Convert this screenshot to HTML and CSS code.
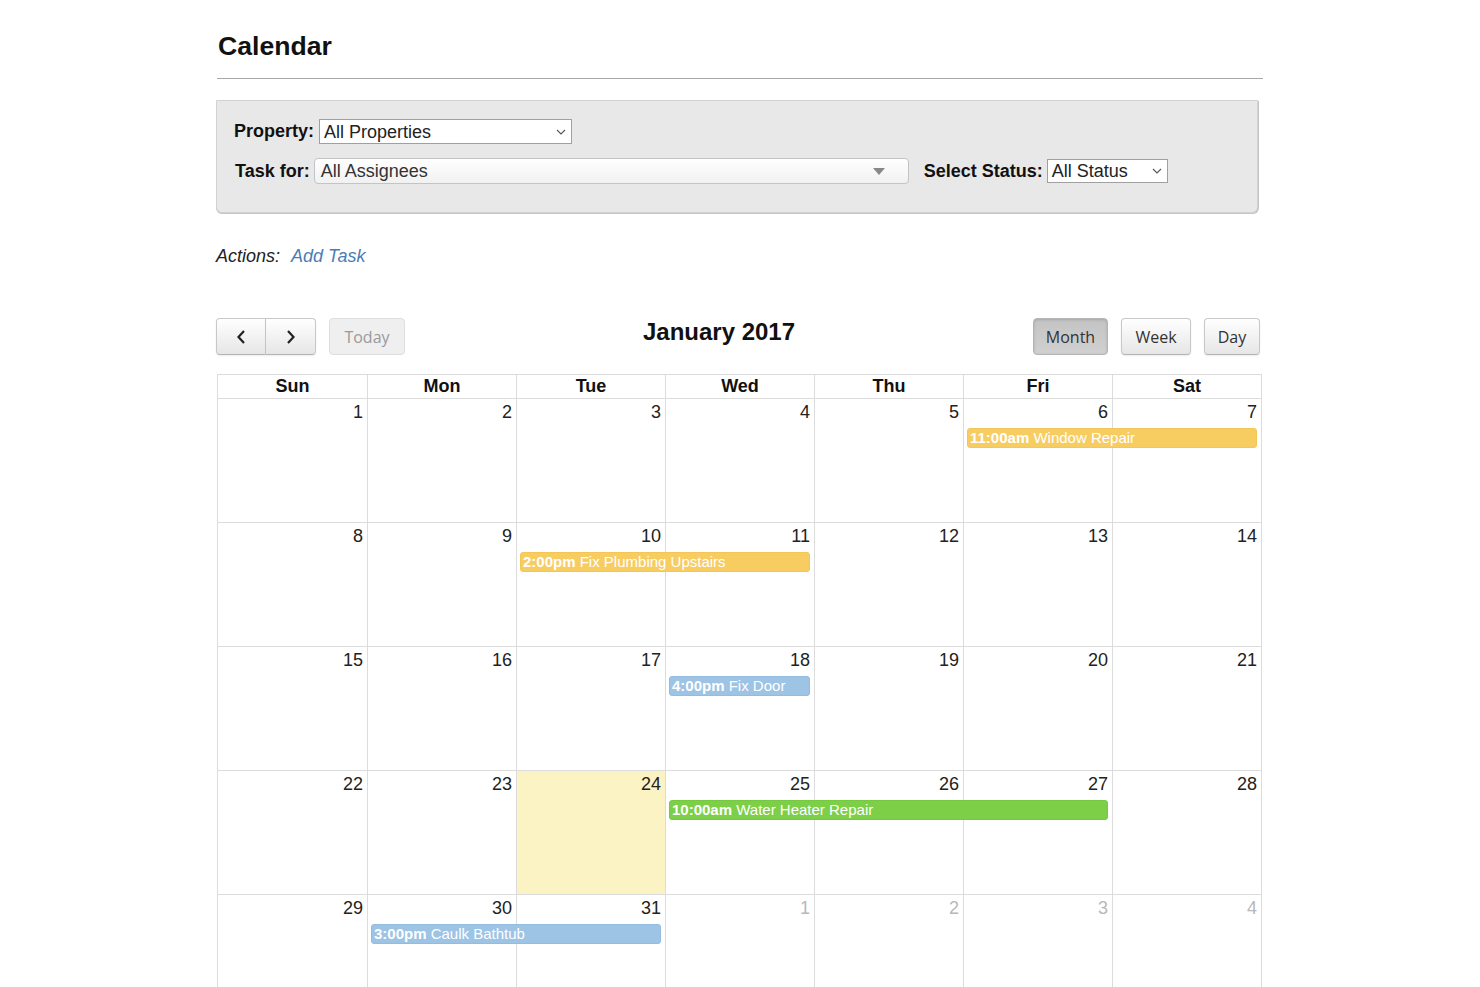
FILE: index.html
```html
<!DOCTYPE html>
<html lang="en">
<head>
<meta charset="utf-8">
<title>Calendar</title>
<link rel="stylesheet" href="styles.css">
</head>
<body>
<div class="page">
  <div class="page-header">
    <h1 class="page-title">Calendar</h1>
  </div>

  <div class="filters">
    <div class="filter-row">
      <span class="filter-label">Property:</span>
      <div class="select select-plain select-property">
        <span class="select-text">All Properties</span>
        <svg class="chev" width="10" height="6" viewBox="0 0 10 6"><path d="M1 1 L5 5 L9 1" fill="none" stroke="#555" stroke-width="1.1"/></svg>
      </div>
    </div>
    <div class="filter-row">
      <span class="filter-label label-task">Task for:</span>
      <div class="select select-rounded select-assignee">
        <span class="select-text">All Assignees</span>
        <svg class="tri" width="12" height="7" viewBox="0 0 12 7"><path d="M0 0 L12 0 L6 7 Z" fill="#888"/></svg>
      </div>
      <span class="filter-label label-status">Select Status:</span>
      <div class="select select-plain select-status">
        <span class="select-text">All Status</span>
        <svg class="chev" width="10" height="6" viewBox="0 0 10 6"><path d="M1 1 L5 5 L9 1" fill="none" stroke="#555" stroke-width="1.1"/></svg>
      </div>
    </div>
  </div>

  <div class="actions">
    <span class="actions-label">Actions:</span>
    <a class="actions-link" href="#">Add Task</a>
  </div>

  <div class="toolbar">
    <div class="toolbar-left">
      <div class="btn-group">
        <button class="btn btn-icon btn-first" type="button" aria-label="prev">
          <svg width="10" height="16" viewBox="0 0 10 16"><path d="M8 2 L2.5 8 L8 14" fill="none" stroke="#222" stroke-width="2.2"/></svg>
        </button>
        <button class="btn btn-icon btn-last" type="button" aria-label="next">
          <svg width="10" height="16" viewBox="0 0 10 16"><path d="M2 2 L7.5 8 L2 14" fill="none" stroke="#222" stroke-width="2.2"/></svg>
        </button>
      </div>
      <button class="btn btn-today" type="button">Today</button>
    </div>
    <h2 class="cal-title">January 2017</h2>
    <div class="toolbar-right">
      <button class="btn btn-view btn-active btn-month" type="button">Month</button>
      <button class="btn btn-view btn-week" type="button">Week</button>
      <button class="btn btn-view btn-day" type="button">Day</button>
    </div>
  </div>

  <div class="calendar">
    <div class="dow-row">
      <div class="dow">Sun</div><div class="dow">Mon</div><div class="dow">Tue</div><div class="dow">Wed</div><div class="dow">Thu</div><div class="dow">Fri</div><div class="dow">Sat</div>
    </div>

    <div class="week">
      <div class="bg c1"></div><div class="bg c2"></div><div class="bg c3"></div><div class="bg c4"></div><div class="bg c5"></div><div class="bg c6"></div><div class="bg c7"></div>
      <div class="num c1">1</div><div class="num c2">2</div><div class="num c3">3</div><div class="num c4">4</div><div class="num c5">5</div><div class="num c6">6</div><div class="num c7">7</div>
      <div class="event ev-yellow s6 e8"><b>11:00am</b> Window Repair</div>
    </div>

    <div class="week">
      <div class="bg c1"></div><div class="bg c2"></div><div class="bg c3"></div><div class="bg c4"></div><div class="bg c5"></div><div class="bg c6"></div><div class="bg c7"></div>
      <div class="num c1">8</div><div class="num c2">9</div><div class="num c3">10</div><div class="num c4">11</div><div class="num c5">12</div><div class="num c6">13</div><div class="num c7">14</div>
      <div class="event ev-yellow s3 e5"><b>2:00pm</b> Fix Plumbing Upstairs</div>
    </div>

    <div class="week">
      <div class="bg c1"></div><div class="bg c2"></div><div class="bg c3"></div><div class="bg c4"></div><div class="bg c5"></div><div class="bg c6"></div><div class="bg c7"></div>
      <div class="num c1">15</div><div class="num c2">16</div><div class="num c3">17</div><div class="num c4">18</div><div class="num c5">19</div><div class="num c6">20</div><div class="num c7">21</div>
      <div class="event ev-blue s4 e5"><b>4:00pm</b> Fix Door</div>
    </div>

    <div class="week">
      <div class="bg c1"></div><div class="bg c2"></div><div class="bg c3 today"></div><div class="bg c4"></div><div class="bg c5"></div><div class="bg c6"></div><div class="bg c7"></div>
      <div class="num c1">22</div><div class="num c2">23</div><div class="num c3">24</div><div class="num c4">25</div><div class="num c5">26</div><div class="num c6">27</div><div class="num c7">28</div>
      <div class="event ev-green s4 e7"><b>10:00am</b> Water Heater Repair</div>
    </div>

    <div class="week">
      <div class="bg c1"></div><div class="bg c2"></div><div class="bg c3"></div><div class="bg c4"></div><div class="bg c5"></div><div class="bg c6"></div><div class="bg c7"></div>
      <div class="num c1">29</div><div class="num c2">30</div><div class="num c3">31</div><div class="num c4 other">1</div><div class="num c5 other">2</div><div class="num c6 other">3</div><div class="num c7 other">4</div>
      <div class="event ev-blue s2 e4"><b>3:00pm</b> Caulk Bathtub</div>
    </div>
  </div>
</div>
</body>
</html>
```

FILE: styles.css
```css
html, body {
  margin: 0;
  padding: 0;
  background: #fff;
}

body {
  font-family: "Liberation Sans", Arial, sans-serif;
  color: #111;
}

.page {
  width: 1046px;
  margin: 0 auto;
  padding-top: 29px;
}

.page-header {
  border-bottom: 1px solid #a8a8a8;
  padding-bottom: 15px;
}

.page-title {
  margin: 0 0 0 1px;
  font-size: 26.6px;
  line-height: 34px;
  font-weight: bold;
  color: #111;
}

/* Filters */
.filters {
  margin-top: 21px;
  width: 1042px;
  margin-left: -1px;
  background: #e8e8e8;
  border: 1px solid #d2d2d2;
  border-radius: 0 0 6px 6px;
  box-shadow: 1px 1px 0 #c6c6c6, 0 1px 0 #c6c6c6;
  padding: 18px 0 27px 17px;
  box-sizing: border-box;
  height: 113px;
}

.filter-row {
  display: flex;
  align-items: center;
}

.filter-row + .filter-row {
  margin-top: 14px;
}

.filter-label {
  font-size: 18px;
  font-weight: bold;
  color: #111;
  white-space: nowrap;
}

.label-task {
  margin-left: 1px;
}

.label-status {
  margin-left: 15px;
}

.select {
  display: flex;
  align-items: center;
  justify-content: space-between;
  box-sizing: border-box;
  background: #fff;
  font-size: 18px;
  color: #222;
  margin-left: 5px;
}

.select-plain {
  border: 1px solid #a0a0a0;
  height: 25px;
  padding: 0 4px 0 4px;
}

.select-property {
  width: 253px;
}

.select-status {
  width: 121px;
  height: 24px;
  margin-left: 4px;
}

.select-rounded {
  width: 595px;
  height: 26px;
  border: 1px solid #c4c4c4;
  border-radius: 4px;
  background: linear-gradient(#ffffff, #f1f1f1);
  padding: 0 23px 0 6px;
  color: #333;
  margin-left: 4px;
}

.select-text {
  white-space: nowrap;
  line-height: 22px;
}

.chev {
  margin-right: 1px;
}

/* Actions */
.actions {
  margin-top: 32px;
  font-size: 18px;
  font-style: italic;
  line-height: 22px;
  margin-left: -1px;
}

.actions-label {
  color: #222;
}

.actions-link {
  color: #4a7db5;
  text-decoration: none;
  margin-left: 6px;
}

/* Toolbar */
.toolbar {
  margin-top: 51px;
  display: flex;
  justify-content: space-between;
  align-items: flex-start;
  margin-left: -1px;
  width: 1044px;
}

.toolbar-left, .toolbar-right {
  display: flex;
  gap: 13px;
}

.btn-group {
  display: flex;
}

.btn {
  font-family: "Open Sans", "DejaVu Sans", sans-serif;
  font-size: 16px;
  color: #333;
  height: 37px;
  border: 1px solid #c8c8c8;
  border-bottom-color: #b4b4b4;
  border-radius: 4px;
  background: linear-gradient(#ffffff, #e6e6e6);
  box-shadow: 0 1px 2px rgba(0,0,0,0.08);
  padding: 0;
  display: flex;
  align-items: center;
  justify-content: center;
  cursor: pointer;
}

.btn-icon {
  width: 50px;
}

.btn-first {
  border-radius: 4px 0 0 4px;
}

.btn-last {
  border-radius: 0 4px 4px 0;
  border-left: none;
  width: 50px;
}

.btn-today {
  width: 76px;
  color: #9a9a9a;
  background: #efefef;
  border-color: #dedede;
  box-shadow: none;
}

.btn-month { width: 75px; }
.btn-week { width: 70px; }
.btn-day { width: 56px; }

.btn-active {
  background: linear-gradient(#c4c4c4, #d0d0d0);
  border-color: #b4b4b4;
  box-shadow: inset 0 1px 3px rgba(0,0,0,0.15);
}

.cal-title {
  margin: 0;
  font-size: 24px;
  line-height: 28px;
  font-weight: bold;
  color: #111;
}

/* Calendar grid */
.calendar {
  margin-top: 19px;
  border: 1px solid #dcdcdc;
  width: 1045px;
  box-sizing: border-box;
  margin-left: 0;
}

.dow-row {
  display: grid;
  grid-template-columns: repeat(7, 1fr);
  border-bottom: 1px solid #dcdcdc;
}

.dow {
  text-align: center;
  font-size: 18px;
  font-weight: bold;
  line-height: 23px;
  border-left: 1px solid #dcdcdc;
  color: #111;
}

.dow:first-child {
  border-left: none;
}

.week {
  display: grid;
  grid-template-columns: repeat(7, 1fr);
  grid-template-rows: 29px 20px 1fr;
  height: 124px;
  border-bottom: 1px solid #dcdcdc;
  box-sizing: border-box;
}

.bg {
  grid-row: 1 / -1;
  border-left: 1px solid #dcdcdc;
}

.bg.c1 {
  border-left: none;
}

.today {
  background: #fcf3c5;
}

.c1 { grid-column: 1; }
.c2 { grid-column: 2; }
.c3 { grid-column: 3; }
.c4 { grid-column: 4; }
.c5 { grid-column: 5; }
.c6 { grid-column: 6; }
.c7 { grid-column: 7; }

.num {
  grid-row: 1;
  text-align: right;
  font-size: 18px;
  line-height: 22px;
  padding: 2px 4px 0 0;
  color: #222;
}

.num.other {
  color: #b8b8b8;
}

.event {
  grid-row: 2;
  margin: 0 4px 0 4px;
  height: 20px;
  line-height: 18px;
  border-radius: 3px;
  color: #fff;
  font-size: 15px;
  padding-left: 2px;
  white-space: nowrap;
  overflow: hidden;
  box-sizing: border-box;
}

.event b {
  font-weight: bold;
}

.s2 { grid-column-start: 2; }
.s3 { grid-column-start: 3; }
.s4 { grid-column-start: 4; }
.s6 { grid-column-start: 6; }
.e4 { grid-column-end: 4; }
.e5 { grid-column-end: 5; }
.e7 { grid-column-end: 7; }
.e8 { grid-column-end: 8; }

.ev-yellow {
  background: #f7cd62;
  border: 1px solid #f3c658;
}

.ev-blue {
  background: #9dc3e5;
  border: 1px solid #93bce0;
}

.ev-green {
  background: #7ccf47;
  border: 1px solid #74c940;
}
```
